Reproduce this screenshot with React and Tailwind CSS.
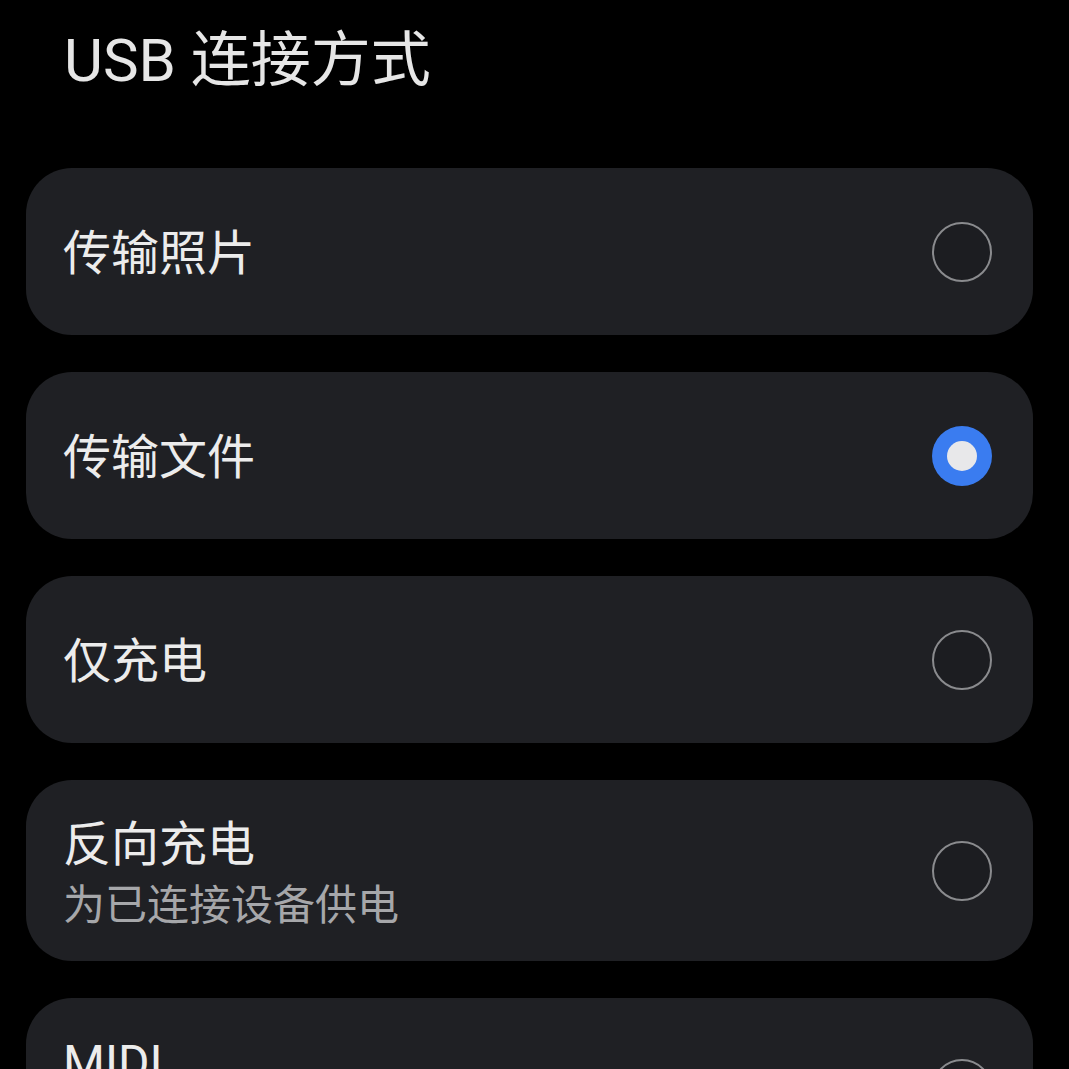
import React from "react";

const items = [
  { title: "传输照片", selected: false },
  { title: "传输文件", selected: true },
  { title: "仅充电", selected: false },
  { title: "反向充电", sub: "为已连接设备供电", selected: false },
  { title: "MIDI", sub: "使用此设备作为 MIDI", selected: false },
];

function Radio({ selected }) {
  if (selected) {
    return (
      <div className="w-[60px] h-[60px] rounded-full bg-[#3a7cf0] flex items-center justify-center shrink-0">
        <div className="w-[30px] h-[30px] rounded-full bg-[#e8e8ea]" />
      </div>
    );
  }
  return (
    <div className="w-[60px] h-[60px] rounded-full border-[2.5px] border-[#8a8b8e] bg-[#1c1d21] shrink-0" />
  );
}

export default function App() {
  return (
    <div
      className="w-[1069px] h-[1069px] bg-black overflow-hidden pl-[26px] pr-[36px]"
      style={{ fontFamily: 'Roboto, "Noto Sans CJK SC", sans-serif' }}
    >
      <div className="h-[168px] pl-[38px] pt-[26px]">
        <div className="text-[60px] leading-[70px] text-[#e6e6e6]">USB 连接方式</div>
      </div>
      <div className="flex flex-col gap-[37px]">
        {items.map((it, i) => (
          <div
            key={i}
            className={`bg-[#1f2024] rounded-[46px] flex items-center justify-between pl-[37px] pr-[41px] ${
              it.sub ? "h-[181px]" : "h-[167px]"
            } shrink-0`}
          >
            <div className={`flex flex-col ${it.sub ? "pt-[10px]" : "pt-[4px]"}`}>
              <div className="text-[48px] leading-[60px] text-[#ececec]">{it.title}</div>
              {it.sub && (
                <div className="text-[42px] leading-[62px] text-[#a6a7aa]">{it.sub}</div>
              )}
            </div>
            <Radio selected={it.selected} />
          </div>
        ))}
      </div>
    </div>
  );
}
